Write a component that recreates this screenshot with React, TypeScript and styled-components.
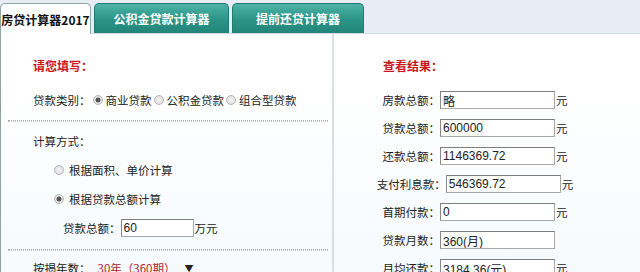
import React from 'react';
import styled, { createGlobalStyle } from 'styled-components';

const GlobalStyle = createGlobalStyle`
  body {
    margin: 0;
    background: #fff;
    font-family: "Noto Sans CJK SC", "Liberation Sans", sans-serif;
  }
`;

const results = [
  { label: '房款总额：', value: '略', unit: true },
  { label: '贷款总额：', value: '600000', unit: true },
  { label: '还款总额：', value: '1146369.72', unit: true },
  { label: '支付利息款：', value: '546369.72', unit: true },
  { label: '首期付款：', value: '0', unit: true },
  { label: '贷款月数：', value: '360(月)', unit: false },
  { label: '月均还款：', value: '3184.36(元)', unit: true },
];

const App = () => {
  return (
    <Page>
      <GlobalStyle />
      <TabBar>
        <Tab $active $w={91}>房贷计算器2017</Tab>
        <Tab $w={135}>公积金贷款计算器</Tab>
        <Tab $w={132}>提前还贷计算器</Tab>
      </TabBar>
      <Body>
        <LeftPanel>
          <Title>请您填写：</Title>
          <Row $h={40} $pad={32}>
            <span>贷款类别：</span>
            <Radio $checked />
            <span>商业贷款</span>
            <Radio />
            <span>公积金贷款</span>
            <Radio />
            <span>组合型贷款</span>
          </Row>
          <Separator />
          <Row $h={28} $pad={32} $top={5}>计算方式：</Row>
          <Row $h={29} $pad={51}>
            <Radio />
            <OptionText>根据面积、单价计算</OptionText>
          </Row>
          <Row $h={29} $pad={51}>
            <Radio $checked />
            <OptionText>根据贷款总额计算</OptionText>
          </Row>
          <Row $h={29} $pad={62}>
            <span>贷款总额：</span>
            <Field $w={73} defaultValue="60" />
            <span>万元</span>
          </Row>
          <Separator $gap={7} />
          <Row $h={34} $pad={32}>
            <span>按揭年数：</span>
            <Years>30年（360期）</Years>
            <Arrow>▼</Arrow>
          </Row>
        </LeftPanel>
        <RightPanel>
          <ResultTitle>查看结果：</ResultTitle>
          <Results>
            {results.map((r) => (
              <ResultRow key={r.label}>
                <span>{r.label}</span>
                <Field $w={115} defaultValue={r.value} />
                <Unit $hidden={!r.unit}>元</Unit>
              </ResultRow>
            ))}
          </Results>
        </RightPanel>
      </Body>
    </Page>
  );
};

export default App;

const Page = styled.div`
  width: 640px;
  height: 272px;
  overflow: hidden;
  font-size: 11.5px;
  color: #222;
`;

const TabBar = styled.div`
  display: flex;
  gap: 3px;
  height: 34px;
  padding-top: 3px;
  box-sizing: border-box;
  background: #e8ecf5;
  border-bottom: 1px solid #d3dae3;
`;

const Tab = styled.div<{ $active?: boolean; $w: number }>`
  width: ${(p) => p.$w}px;
  box-sizing: border-box;
  display: flex;
  align-items: center;
  justify-content: center;
  border-radius: 5px 5px 0 0;
  font-size: 12px;
  font-weight: bold;
  white-space: nowrap;
  border: 1px solid ${(p) => (p.$active ? '#93a5a5' : '#207a70')};
  border-bottom: none;
  color: ${(p) => (p.$active ? '#111' : '#fff')};
  background: ${(p) =>
    p.$active ? '#fff' : 'linear-gradient(#4cb3a6, #2b9487 55%, #238579)'};
  margin-bottom: ${(p) => (p.$active ? '-1px' : '0')};
  position: relative;
`;

const Body = styled.div`
  display: flex;
  height: 238px;
  overflow: hidden;
`;

const LeftPanel = styled.div`
  width: 334px;
  flex-shrink: 0;
  box-sizing: border-box;
  border-left: 1px solid #8fa3a3;
  border-right: 2px solid #d8e0e4;
  background: linear-gradient(#fff, #fff 20%, #f6fafc);
  display: flex;
  flex-direction: column;
`;

const Title = styled.div`
  flex-shrink: 0;
  margin-top: 18px;
  height: 28px;
  line-height: 28px;
  padding-left: 32px;
  color: #c8161d;
  font-weight: bold;
  font-size: 12px;
`;

const Row = styled.div<{ $h: number; $pad: number; $top?: number }>`
  flex-shrink: 0;
  display: flex;
  align-items: center;
  height: ${(p) => p.$h}px;
  margin-top: ${(p) => p.$top ?? 0}px;
  padding-left: ${(p) => p.$pad}px;
  white-space: nowrap;
`;

const Radio = styled.span<{ $checked?: boolean }>`
  display: inline-block;
  width: 10px;
  height: 10px;
  margin: 0 3px 0 2px;
  border-radius: 50%;
  box-sizing: border-box;
  border: 1px solid #b5b5b5;
  background: ${(p) =>
    p.$checked
      ? 'radial-gradient(circle, #555 0 2.2px, #e4e4e4 2.8px)'
      : 'radial-gradient(circle, #f0f0f0, #dcdcdc)'};
`;

const OptionText = styled.span`
  margin-left: 2px;
`;

const Field = styled.input<{ $w: number }>`
  width: ${(p) => p.$w}px;
  height: 18px;
  box-sizing: border-box;
  margin: 0 1px 0 0;
  padding: 0 2px;
  border: 1px solid #a8a8a8;
  border-top-color: #7d7d7d;
  border-left-color: #8a8a8a;
  background: #fff;
  font-family: "Liberation Sans", "Noto Sans CJK SC", sans-serif;
  font-size: 12px;
  color: #222;
  outline: none;
`;

const Separator = styled.div<{ $gap?: number }>`
  flex-shrink: 0;
  margin: ${(p) => p.$gap ?? 0}px 4px 0 7px;
  height: 0;
  border-top: 1px dotted #a9a9a9;
  border-bottom: 1px dotted #c4c4c4;
`;

const Years = styled.span`
  margin-left: 7px;
  color: #b3232b;
`;

const Arrow = styled.span`
  margin-left: 9px;
  font-size: 9px;
  color: #222;
`;

const RightPanel = styled.div`
  flex: 1;
  background: linear-gradient(#fff, #fff 22%, #f6fafc);
  display: flex;
  flex-direction: column;
`;

const ResultTitle = styled(Title)`
  padding-left: 49px;
`;

const Results = styled.div`
  flex-shrink: 0;
  width: 282px;
  margin-top: 6px;
`;

const ResultRow = styled.div`
  display: flex;
  align-items: center;
  justify-content: center;
  height: 28px;
  white-space: nowrap;
`;

const Unit = styled.span<{ $hidden?: boolean }>`
  visibility: ${(p) => (p.$hidden ? 'hidden' : 'visible')};
`;
